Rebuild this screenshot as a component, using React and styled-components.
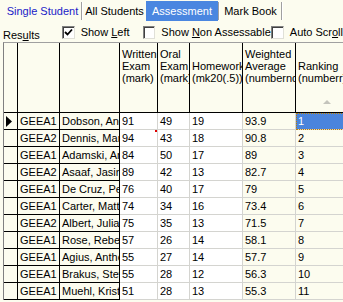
import React from 'react';
import styled, { createGlobalStyle } from 'styled-components';

const GlobalStyle = createGlobalStyle`
  body {
    margin: 0;
    background: #fcfcef;
    overflow: hidden;
    font-family: 'Liberation Sans', Arial, sans-serif;
    font-size: 11px;
    color: #000;
  }
`;

const CREAM = '#fcfcef';

const Page = styled.div`
  width: 343px;
  height: 302px;
  background: ${CREAM};
  overflow: hidden;
`;

const TabBar = styled.div`
  display: flex;
  height: 22px;
  padding-left: 4px;
  align-items: stretch;
`;

const Tab = styled.div`
  width: ${(p) => p.$w}px;
  display: flex;
  align-items: center;
  justify-content: center;
  white-space: nowrap;
  background: ${(p) => (p.$active ? '#4a86e0' : 'transparent')};
  color: ${(p) => (p.$active ? '#fff' : p.$link ? '#1a1ac8' : '#000')};
  margin-top: 1px;
  margin-bottom: 1px;
`;

const TabSep = styled.div`
  width: 1px;
  margin: 2px 0;
  background: #a0a0a0;
  border-right: 1px solid #fff;
`;

const Toolbar = styled.div`
  display: flex;
  height: 20px;
  padding-left: 3px;
  align-items: center;
`;

const Label = styled.div`
  width: 60px;
  padding-top: 5px;
`;

const CheckItem = styled.label`
  display: flex;
  align-items: center;
  width: ${(p) => (p.$w ? `${p.$w}px` : 'auto')};
  white-space: nowrap;
`;

const CheckText = styled.span`
  white-space: pre;
`;

const Box = styled.span`
  width: 11px;
  height: 11px;
  background: #fff;
  border-top: 1px solid #808080;
  border-left: 1px solid #808080;
  border-right: 1px solid #e0e0d8;
  border-bottom: 1px solid #e0e0d8;
  box-shadow: inset 1px 1px 0 #404040;
  margin-right: 6px;
  display: flex;
  align-items: center;
  justify-content: center;
`;

const U = styled.span`
  text-decoration: underline;
`;

const Grid = styled.div`
  display: grid;
  grid-template-columns: 14px 42px 60px 38px 32px 53px 53px 60px;
  grid-auto-rows: 17px;
  grid-template-rows: 70px;
  border-top: 1px solid #a0a0a0;
  border-left: 1px solid #808080;
  margin-left: 3px;
`;

const HeadCell = styled.div`
  border-right: 1px solid #000;
  border-bottom: 1px solid #000;
  background: ${CREAM};
  padding: 5px 0 0 2px;
  line-height: 12px;
  white-space: pre;
  overflow: hidden;
  display: flex;
  flex-direction: column;
`;

const SortArrow = styled.div`
  margin-top: auto;
  margin-bottom: 8px;
  align-self: center;
  width: 0;
  height: 0;
  border-left: 4px solid transparent;
  border-right: 4px solid transparent;
  border-bottom: 4px solid #c4c4bc;
`;

const FixedCell = styled.div`
  border-right: 1px solid #000;
  border-bottom: 1px solid #000;
  background: ${CREAM};
  padding-left: 2px;
  line-height: 16px;
  white-space: nowrap;
  overflow: hidden;
`;

const Indicator = styled(FixedCell)`
  padding-left: 1px;
  display: flex;
  align-items: center;
`;

const Cell = styled.div`
  position: relative;
  border-right: 1px solid #d4d4d0;
  border-bottom: 1px solid #d4d4d0;
  background: ${(p) => (p.$cream ? CREAM : '#fff')};
  padding-left: 2px;
  line-height: 16px;
  white-space: nowrap;
  overflow: hidden;
`;

const FocusCell = styled(Cell)`
  background: #4a84dc;
  color: #fff;
  outline: 1px dotted #c08000;
  outline-offset: -1px;
`;

const Note = styled.span`
  position: absolute;
  right: 0;
  top: 0;
  width: 2px;
  height: 2px;
  background: #e00000;
`;

const rows = [
  ['GEEA1', 'Dobson, Andrew', 91, 49, 19, '93.9', 1],
  ['GEEA2', 'Dennis, Mark', 94, 43, 18, '90.8', 2],
  ['GEEA1', 'Adamski, Arthur', 84, 50, 17, '89', 3],
  ['GEEA2', 'Asaaf, Jasine', 89, 42, 13, '82.7', 4],
  ['GEEA1', 'De Cruz, Peter', 76, 40, 17, '79', 5],
  ['GEEA1', 'Carter, Matthew', 74, 34, 16, '73.4', 6],
  ['GEEA2', 'Albert, Julia', 75, 35, 13, '71.5', 7],
  ['GEEA1', 'Rose, Rebecca', 57, 26, 14, '58.1', 8],
  ['GEEA1', 'Agius, Anthony', 55, 27, 14, '57.7', 9],
  ['GEEA1', 'Brakus, Steven', 55, 28, 12, '56.3', 10],
  ['GEEA1', 'Muehl, Kristina', 51, 28, 13, '55.3', 11],
];

const headers = [
  '',
  '',
  '',
  'Written\nExam\n(mark)',
  'Oral\nExam\n(mark)',
  '\nHomework\n(mk20(.5))',
  'Weighted\nAverage\n(numbernd)',
  '\nRanking\n(numberr)',
];

function Check({ checked }) {
  return (
    <Box>
      {checked && (
        <svg width="9" height="9" viewBox="0 0 9 9">
          <path d="M1 4 L3.5 6.5 L8 1.5" stroke="#000" strokeWidth="1.8" fill="none" />
        </svg>
      )}
    </Box>
  );
}

export default function App() {
  return (
    <Page>
      <GlobalStyle />
      <TabBar>
        <Tab $w={77} $link>Single Student</Tab>
        <TabSep />
        <Tab $w={63}>All Students</Tab>
        <Tab $w={72} $active>Assessment</Tab>
        <TabSep />
        <Tab $w={61}>Mark Book</Tab>
        <TabSep />
      </TabBar>
      <Toolbar>
        <Label>
          Res<U>u</U>lts
        </Label>
        <CheckItem $w={83}>
          <Check checked />
          <CheckText>
            Show <U>L</U>eft
          </CheckText>
        </CheckItem>
        <CheckItem $w={128}>
          <Check />
          <CheckText>
            Show <U>N</U>on Assessable
          </CheckText>
        </CheckItem>
        <CheckItem>
          <Check />
          <CheckText>
            Auto Scr<U>o</U>ll
          </CheckText>
        </CheckItem>
      </Toolbar>
      <Grid>
        {headers.map((h, i) => (
          <HeadCell key={i}>
            {h}
            {i === 7 && <SortArrow />}
          </HeadCell>
        ))}
        {rows.map((r, i) => (
          <React.Fragment key={i}>
            <Indicator>
              {i === 0 && (
                <svg width="8" height="11" viewBox="0 0 8 11">
                  <path d="M1 0 L7 5.5 L1 11 Z" fill="#000" />
                </svg>
              )}
            </Indicator>
            <FixedCell>{r[0]}</FixedCell>
            <FixedCell>{r[1]}</FixedCell>
            <Cell>
              {r[2]}
              {i === 1 && <Note />}
            </Cell>
            <Cell>{r[3]}</Cell>
            <Cell>{r[4]}</Cell>
            <Cell $cream>{r[5]}</Cell>
            {i === 0 ? <FocusCell>{r[6]}</FocusCell> : <Cell $cream>{r[6]}</Cell>}
          </React.Fragment>
        ))}
      </Grid>
    </Page>
  );
}
